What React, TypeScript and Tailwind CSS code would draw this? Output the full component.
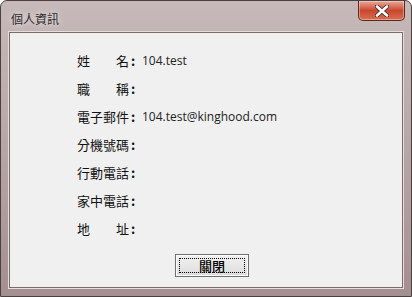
import React from 'react';

const rows: { label: string; value?: string; spread?: boolean }[] = [
  { label: '姓名', value: '104.test', spread: true },
  { label: '職稱', spread: true },
  { label: '電子郵件', value: '104.test@kinghood.com' },
  { label: '分機號碼' },
  { label: '行動電話' },
  { label: '家中電話' },
  { label: '地址', spread: true },
];

function CloseButton() {
  return (
    <div className="absolute right-[6px] top-0 w-[47px] h-[20px] rounded-b-[5px] border border-t-0 border-[#5a2a22] bg-gradient-to-b from-[#e9a898] via-[#c9462e] to-[#d8704e] flex items-center justify-center shadow-[inset_0_0_0_1px_rgba(255,255,255,0.35)]">
      <svg width="14" height="12" viewBox="0 0 14 12">
        <path
          d="M2 1.5 L12 10.5 M12 1.5 L2 10.5"
          stroke="#3a2a2a"
          strokeWidth="4.2"
          strokeLinecap="round"
        />
        <path
          d="M2 1.5 L12 10.5 M12 1.5 L2 10.5"
          stroke="#ffffff"
          strokeWidth="2.6"
          strokeLinecap="round"
        />
      </svg>
    </div>
  );
}

export default function App() {
  return (
    <div className="w-[412px] h-[297px] bg-white">
      <div className="relative w-[412px] h-[297px] rounded-t-[7px] border border-[#4b4040] bg-gradient-to-b from-[#c7b9b9] via-[#b7a6a6] to-[#a48f90] flex flex-col px-[7px] pb-[7px]">
        {/* title bar */}
        <div className="h-[30px] flex items-center pl-[3px] pt-[5px]">
          <span
            className="text-[12px] text-[#2a2a2a] [text-shadow:0_0_6px_rgba(255,255,255,0.9)]"
            style={{ fontFamily: '"Noto Sans CJK TC", sans-serif' }}
          >
            個人資訊
          </span>
        </div>
        <CloseButton />

        {/* client area */}
        <div className="flex-1 border border-[#e6dede] bg-[#f0f0f0]">
          <div className="h-full border border-[#7a6a6a] bg-[#f0f0f0] flex flex-col">
            <div
              className="flex flex-col pl-[67px] pt-[14px] text-[12px] text-[#111]"
              style={{ fontFamily: '"Open Sans", "Noto Sans CJK TC", sans-serif' }}
            >
              {rows.map((r) => (
                <div key={r.label} className="h-[28px] flex items-center">
                  <span
                    className={`w-[52px] flex text-[13px] ${r.spread ? 'justify-between' : ''}`}
                    style={{ fontFamily: '"Noto Sans CJK TC", sans-serif' }}
                  >
                    {r.label.split('').map((c, i) => (
                      <span key={i}>{c}</span>
                    ))}
                  </span>
                  <span
                    className="w-[13px] text-[13px] font-bold pl-[2px]"
                    style={{ fontFamily: '"Noto Sans CJK TC", sans-serif' }}
                  >
                    :
                  </span>
                  {r.value && <span className="text-[#222]">{r.value}</span>}
                </div>
              ))}
            </div>
            <div className="flex justify-center mt-[11px] pl-[12px]">
              <div className="w-[74px] h-[23px] border border-[#707070] bg-gradient-to-b from-[#f2f2f2] to-[#dcdcdc] p-[3px] shadow-[inset_0_0_0_1px_#fbfbfb]">
                <div
                  className="h-full border border-dotted border-black flex items-center justify-center text-[13px] text-black font-medium"
                  style={{ fontFamily: '"Noto Sans CJK TC", sans-serif' }}
                >
                  關閉
                </div>
              </div>
            </div>
          </div>
        </div>
      </div>
    </div>
  );
}
